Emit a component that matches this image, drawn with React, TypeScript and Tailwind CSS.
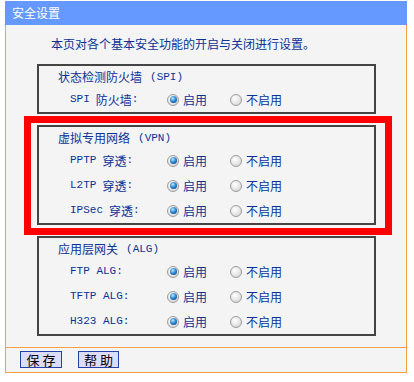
import React from "react";

const cjk = "font-['Noto_Sans_CJK_SC','Noto_Sans',sans-serif]";
const mono = "font-['Liberation_Mono','Noto_Sans_CJK_SC',monospace] text-[11px]";

const Radio = ({ checked }: { checked?: boolean }) => (
    <span className="w-[12px] h-[12px] rounded-full border border-[#9c9c9c] bg-[radial-gradient(circle_at_40%_35%,#ffffff,#cfcfcf)] flex items-center justify-center shrink-0">
        {checked && (
            <span className="w-[7px] h-[7px] rounded-full bg-[radial-gradient(circle_at_40%_35%,#b0e8ff,#1c78c8_55%,#0b3c82)]" />
        )}
    </span>
);

const Row = ({ latin, zh }: { latin: string; zh?: string }) => (
    <div className="flex items-center h-[25px]">
        <div className="w-[128px] pl-[31px] flex items-center">
            <span className={mono}>{latin}</span>
            {zh && <span className="ml-[6px]">{zh}</span>}
            <span className={mono}>:</span>
        </div>
        <Radio checked />
        <span className="ml-[4px] w-[47px]">启用</span>
        <Radio />
        <span className="ml-[4px]">不启用</span>
    </div>
);

const Group = ({ title, tag, rows }: { title: string; tag: string; rows: [string, string?][] }) => (
    <div className="border-2 border-[#444444] pt-[1px]">
        <div className="h-[20px] leading-[20px] pl-[19px] flex items-center">
            <span>{title}</span>
            <span className={mono + " ml-[8px]"}>({tag})</span>
        </div>
        {rows.map(([l, z]) => (
            <Row key={l + (z ?? "")} latin={l} zh={z} />
        ))}
    </div>
);

const App = () => {
    return (
        <div className={"w-[414px] h-[382px] bg-white pt-[1px] text-[12px] text-[#0a3296] " + cjk}>
            <div className="ml-[5px] w-[402px]">
                <div className="h-[24px] bg-[#6699ff] text-white text-[12px] leading-[24px] pl-[7px]">
                    安全设置
                </div>
                <div className="bg-[#f4f4f4] border-x border-b border-[#f7a044]">
                    <div className="pt-[9px] h-[29px] leading-[20px] pl-[45px]">
                        本页对各个基本安全功能的开启与关闭进行设置。
                    </div>
                    <div className="ml-[31px] w-[339px] mt-[10px] flex flex-col gap-[11px]">
                        <Group title="状态检测防火墙" tag="SPI" rows={[["SPI", "防火墙"]]} />
                        <div className="relative">
                            <Group
                                title="虚拟专用网络"
                                tag="VPN"
                                rows={[
                                    ["PPTP", "穿透"],
                                    ["L2TP", "穿透"],
                                    ["IPSec", "穿透"],
                                ]}
                            />
                            <div className="absolute left-[-13px] top-[-9px] right-[-16px] bottom-[-10px] border-[7px] border-[#ff0000] pointer-events-none" />
                        </div>
                        <Group
                            title="应用层网关"
                            tag="ALG"
                            rows={[["FTP ALG"], ["TFTP ALG"], ["H323 ALG"]]}
                        />
                    </div>
                    <div className="mt-[11px] border-t border-[#f7a044] pt-[3px] pb-[4px] pl-[14px] flex gap-[16px]">
                        <button className="w-[42px] h-[17px] border border-[#2142a8] bg-[#dcdcfc] text-black text-[13px] leading-[15px] tracking-[3px] pl-[3px]">
                            保存
                        </button>
                        <button className="w-[41px] h-[17px] border border-[#2142a8] bg-[#dcdcfc] text-black text-[13px] leading-[15px] tracking-[3px] pl-[3px]">
                            帮助
                        </button>
                    </div>
                </div>
            </div>
        </div>
    );
};

export default App;
